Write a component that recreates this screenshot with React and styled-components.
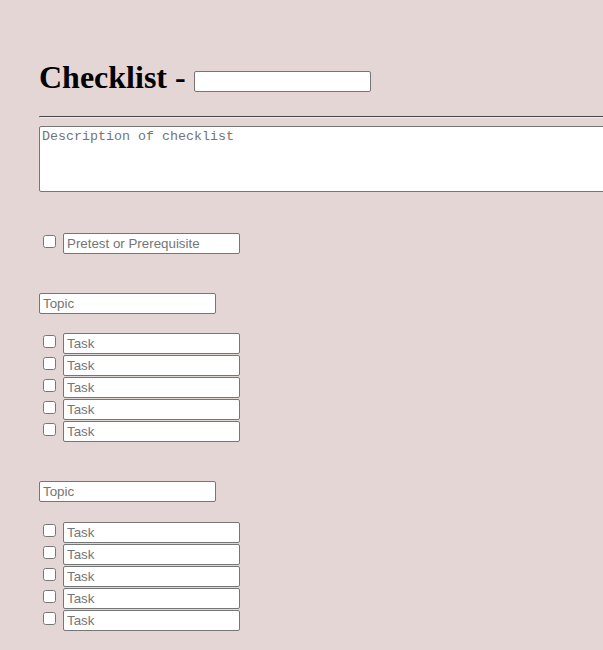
import React from 'react';
import styled, { createGlobalStyle } from 'styled-components';

const Global = createGlobalStyle`
    html, body {
        margin: 0;
        background: #e5d6d6;
        overflow: hidden;
    }
`;

const Page = styled.div`
    padding: 0 0 40px 39px;
    width: 700px;
    font-family: "Liberation Serif", serif;
`;

const Title = styled.h1`
    margin: 59px 0 0;
    font-size: 32px;
    font-weight: bold;
    line-height: 37px;
    color: #000;
    display: flex;
    align-items: flex-end;
    gap: 8px;
`;

const TitleField = styled.input`
    box-sizing: border-box;
    width: 177px;
    height: 21px;
    margin-bottom: 4px;
    border: 1px solid #767676;
    border-radius: 2px;
    background: #fff;
`;

const Rule = styled.hr`
    margin: 20px 0 0;
    border: 1px inset #eee;
    border-top-color: #9a9a9a;
    width: 680px;
`;

const Description = styled.textarea`
    display: block;
    box-sizing: border-box;
    margin-top: 8px;
    width: 680px;
    height: 66px;
    padding: 2px;
    border: 1px solid #767676;
    border-radius: 2px;
    background: #fff;
    font-family: "Liberation Mono", monospace;
    font-size: 13.33px;
    resize: none;
    &::placeholder { color: #757575; }
`;

const Field = styled.input`
    box-sizing: border-box;
    width: 177px;
    height: 21px;
    padding: 1px 3px;
    border: 1px solid #767676;
    border-radius: 2px;
    background: #fff;
    font-family: "Liberation Sans", Arial, sans-serif;
    font-size: 13.33px;
    &::placeholder { color: #757575; }
`;

const Row = styled.div`
    display: flex;
    align-items: flex-start;
    gap: 7px;
`;

const Check = styled.input`
    width: 13px;
    height: 13px;
    margin: 2px 0 0 4px;
`;

const Pretest = styled.div`
    margin-top: ${p => p.$top}px;
`;

const Section = styled.section`
    margin-top: 39px;
    display: flex;
    flex-direction: column;
`;

const Tasks = styled.div`
    margin-top: ${p => p.$top}px;
    display: flex;
    flex-direction: column;
    gap: 1px;
`;

const TaskRow = ({ placeholder }) => (
    <Row>
        <Check type="checkbox" />
        <Field placeholder={placeholder} />
    </Row>
);

const Topic = ({ taskTop }) => (
    <Section>
        <Field placeholder="Topic" />
        <Tasks $top={taskTop}>
            {[0, 1, 2, 3, 4].map(i => <TaskRow key={i} placeholder="Task" />)}
        </Tasks>
    </Section>
);

const App = () => {
    return (
        <Page>
            <Global />
            <Title>
                Checklist -
                <TitleField />
            </Title>
            <Rule />
            <Description placeholder="Description of checklist" />
            <Pretest $top={41}>
                <TaskRow placeholder="Pretest or Prerequisite" />
            </Pretest>
            <Topic taskTop={19} />
            <Topic taskTop={20} />
        </Page>
    );
}

export default App;
